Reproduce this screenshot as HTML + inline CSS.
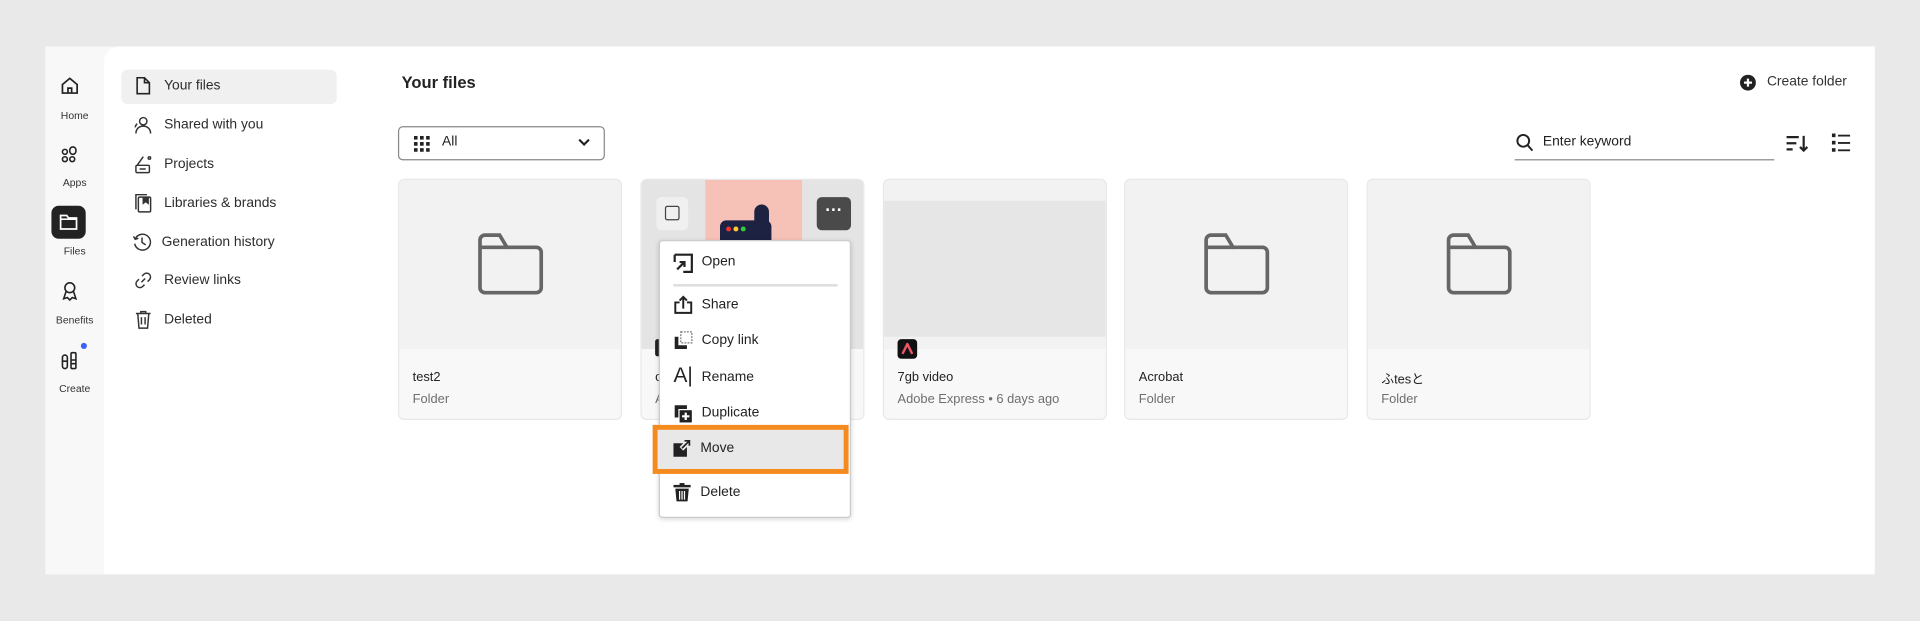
<!DOCTYPE html>
<html><head><meta charset="utf-8">
<style>
*{margin:0;padding:0;box-sizing:border-box}
html,body{width:1920px;height:621px;overflow:hidden;background:#e9e9e9;font-family:"Liberation Sans","Noto Sans CJK JP",sans-serif;color:#222}
#s{position:absolute;left:0;top:0;width:1568px;height:507px;transform:scale(1.22449);transform-origin:0 0}
.a{position:absolute}
.panel{left:37px;top:38px;width:1494px;height:431px;background:#f8f8f8}
.main{left:85px;top:38px;width:1446px;height:431px;background:#fff;border-top-left-radius:12px}
.rl{position:absolute;width:48px;left:37px;text-align:center;font-size:8.5px;color:#333}
.nav{position:absolute;left:134px;font-size:11.3px;color:#2c2c2c}
.ni{position:absolute;left:109px}
.card{position:absolute;top:146px;width:183px;height:197px;border:1px solid #e8e8e8;border-radius:5px;background:#f8f8f8;overflow:hidden}
.card .img{position:absolute;left:0;top:0;right:0;height:138px;background:#f2f2f2}
.card .t{position:absolute;left:11px;top:155px;font-size:10.5px;color:#222}
.card .st{position:absolute;left:11px;top:173px;font-size:10.5px;color:#6e6e6e}
.fold{position:absolute;left:63px;top:43px}
.menu{left:538px;top:196px;width:157px;height:227px;background:#fff;border:1px solid #ccc;border-radius:3px;box-shadow:0 1px 4px rgba(0,0,0,.15)}
.mi{position:absolute;left:34px;font-size:11.3px;color:#222}
.mic{position:absolute;left:11px}
</style></head><body>
<div id="s">
<div class="a panel"></div>
<div class="a main"></div>

<svg class="a" style="left:49px;top:62px" width="16" height="16" viewBox="0 0 16 16" fill="none" stroke="#222" stroke-width="1.4"><path d="M2 7L8 2l6 5v7H2z"/><path d="M6.5 14v-4h3v4"/></svg>
<div class="rl" style="top:89px">Home</div>
<svg class="a" style="left:49px;top:118px" width="16" height="16" viewBox="0 0 16 16" fill="none" stroke="#222" stroke-width="1.3"><circle cx="4" cy="6" r="2"/><circle cx="4" cy="12" r="2"/><circle cx="10" cy="12" r="2"/><rect x="8" y="2" width="5" height="6" rx="2.5"/></svg>
<div class="rl" style="top:144px">Apps</div>
<div class="a" style="left:42px;top:168px;width:28px;height:27px;background:#222;border-radius:6px"></div>
<svg class="a" style="left:48px;top:174px" width="16" height="15" viewBox="0 0 16 15" fill="none" stroke="#fff" stroke-width="1.4"><path d="M1.5 2h5l1.5 2h6.5v9h-13z"/><path d="M1.5 5h13"/></svg>
<div class="rl" style="top:200px">Files</div>
<svg class="a" style="left:49px;top:229px" width="16" height="17" viewBox="0 0 16 17" fill="none" stroke="#222" stroke-width="1.3"><circle cx="8" cy="6" r="4"/><path d="M5 9l-2 6 3-1 2 2 2-2 3 1-2-6"/></svg>
<div class="rl" style="top:256px">Benefits</div>
<svg class="a" style="left:49px;top:286px" width="16" height="17" viewBox="0 0 16 17" fill="none" stroke="#222" stroke-width="1.3"><rect x="2" y="4" width="4" height="11" rx="2"/><rect x="9" y="2" width="4" height="13" rx="1"/><path d="M2 9h4M9 8h4M9 11h4"/></svg>
<div class="a" style="left:66px;top:280px;width:5px;height:5px;border-radius:50%;background:#3b63fb"></div>
<div class="rl" style="top:312px">Create</div>

<div class="a" style="left:99px;top:57px;width:176px;height:28px;background:#f0f0f0;border-radius:5px"></div>
<svg class="ni" style="top:62px" width="16" height="16" viewBox="0 0 16 16" fill="none" stroke="#222" stroke-width="1.3"><path d="M3 1.5h6l4 4v9H3z"/><path d="M9 1.5v4h4"/></svg>
<div class="nav" style="top:64px">Your files</div>
<svg class="ni" style="top:94px" width="16" height="16" viewBox="0 0 16 16" fill="none" stroke="#333" stroke-width="1.2"><circle cx="8" cy="5" r="3"/><path d="M2 15c0-4 3-6 6-6s6 2 6 6"/><path d="M3 7c-1 1-1.5 2-1.5 3"/></svg>
<div class="nav" style="top:96px">Shared with you</div>
<svg class="ni" style="top:126px" width="16" height="16" viewBox="0 0 16 16" fill="none" stroke="#333" stroke-width="1.2"><rect x="2" y="9" width="11" height="6" rx="1"/><path d="M3 9l5-7M5 12h5"/><circle cx="13" cy="3" r="1"/></svg>
<div class="nav" style="top:128px">Projects</div>
<svg class="ni" style="top:158px" width="16" height="16" viewBox="0 0 16 16" fill="none" stroke="#333" stroke-width="1.2"><rect x="4" y="3" width="10" height="12" rx="1"/><path d="M2 13V1h9"/><path d="M8 3v5l2-1.5 2 1.5V3" fill="#333"/></svg>
<div class="nav" style="top:160px">Libraries &amp; brands</div>
<svg class="ni" style="top:190px;left:108px" width="16" height="16" viewBox="0 0 16 16" fill="none" stroke="#333" stroke-width="1.2"><path d="M2.5 5A6.5 6.5 0 1 1 2 9"/><path d="M1 3l1.5 2.5L5 4.5"/><path d="M8 4v4l3 2"/></svg>
<div class="nav" style="top:192px;left:132px">Generation history</div>
<svg class="ni" style="top:221px" width="16" height="16" viewBox="0 0 16 16" fill="none" stroke="#333" stroke-width="1.2"><path d="M6.5 9.5l3-3"/><path d="M7 4.5l1.5-1.5a3 3 0 0 1 4.5 4.5L11.5 9"/><path d="M9 11.5L7.5 13A3 3 0 0 1 3 8.5L4.5 7"/></svg>
<div class="nav" style="top:223px">Review links</div>
<svg class="ni" style="top:253px" width="16" height="16" viewBox="0 0 16 16" fill="none" stroke="#333" stroke-width="1.2"><path d="M2 3h12M6 3V1.5h4V3M3.5 3l1 12h7l1-12"/><path d="M6.5 6v6M9.5 6v6"/></svg>
<div class="nav" style="top:255px">Deleted</div>

<div class="a" style="left:328px;top:60px;font-size:13.5px;font-weight:bold;color:#222">Your files</div>
<svg class="a" style="left:1421px;top:61px" width="13" height="13" viewBox="0 0 14 14"><circle cx="7" cy="7" r="7" fill="#222"/><path d="M7 3.5v7M3.5 7h7" stroke="#fff" stroke-width="2"/></svg>
<div class="a" style="left:1443px;top:61px;font-size:11.3px;color:#333">Create folder</div>

<div class="a" style="left:325px;top:103px;width:169px;height:28px;border:1px solid #888;border-radius:4px;background:#fff"></div>
<svg class="a" style="left:338px;top:111px" width="13" height="13" viewBox="0 0 13 13" fill="#222"><rect x="0" y="0" width="3" height="3"/><rect x="5" y="0" width="3" height="3"/><rect x="10" y="0" width="3" height="3"/><rect x="0" y="5" width="3" height="3"/><rect x="5" y="5" width="3" height="3"/><rect x="10" y="5" width="3" height="3"/><rect x="0" y="10" width="3" height="3"/><rect x="5" y="10" width="3" height="3"/><rect x="10" y="10" width="3" height="3"/></svg>
<div class="a" style="left:361px;top:110px;font-size:11.3px;color:#222">All</div>
<svg class="a" style="left:472px;top:113px" width="10" height="7" viewBox="0 0 10 7" fill="none" stroke="#222" stroke-width="1.8"><path d="M1 1l4 4 4-4"/></svg>

<svg class="a" style="left:1238px;top:109px" width="14" height="15" viewBox="0 0 14 15" fill="none" stroke="#222" stroke-width="1.6"><circle cx="6" cy="6" r="4.8"/><path d="M9.5 9.5l4 4.5"/></svg>
<div class="a" style="left:1260px;top:110px;font-size:11.3px;color:#222">Enter keyword</div>
<div class="a" style="left:1237px;top:130px;width:212px;height:1px;background:#888"></div>
<svg class="a" style="left:1459px;top:110px" width="18" height="15" viewBox="0 0 18 15" fill="none" stroke="#222" stroke-width="2"><path d="M0 2h10M0 7h8M0 12h5M14 1v12M11 10l3 3 3-3" stroke-width="1.8"/></svg>
<svg class="a" style="left:1496px;top:109px" width="15" height="15" viewBox="0 0 15 15" fill="#222"><rect x="0" y="0" width="3" height="3"/><rect x="0" y="6" width="3" height="3"/><rect x="0" y="12" width="3" height="3"/><rect x="5" y="1" width="10" height="1.5"/><rect x="5" y="7" width="10" height="1.5"/><rect x="5" y="13" width="10" height="1.5"/></svg>

<div class="card" style="left:325px"><div class="img"></div>
<svg class="fold" width="56" height="52" viewBox="0 0 56 52" fill="none" stroke="#666" stroke-width="3"><path d="M3 14V6a4 4 0 0 1 4-4h12l6 10h24a4 4 0 0 1 4 4v29a4 4 0 0 1-4 4H7a4 4 0 0 1-4-4z"/><path d="M3 12h22"/></svg>
<div class="t">test2</div><div class="st">Folder</div></div>

<div class="card" style="left:523px"><div class="img" style="background:#e4e4e4"></div>
<div class="a" style="left:52px;top:0;width:79px;height:138px;background:#f6c1b6"></div>
<div class="a" style="left:64px;top:33px;width:42px;height:30px;background:#1d2142;border-radius:5px"></div>
<div class="a" style="left:92px;top:20px;width:12px;height:40px;background:#1d2142;border-radius:6px 6px 0 0"></div>
<div class="a" style="left:69px;top:38px;width:4px;height:4px;border-radius:50%;background:#e33"></div>
<div class="a" style="left:75px;top:38px;width:4px;height:4px;border-radius:50%;background:#fc3"></div>
<div class="a" style="left:81px;top:38px;width:4px;height:4px;border-radius:50%;background:#3c3"></div>
<div class="a" style="left:12px;top:14px;width:26px;height:27px;background:#f0f0f0;border-radius:4px"></div>
<div class="a" style="left:19px;top:21px;width:12px;height:12px;border:1.5px solid #444;border-radius:2px"></div>
<div class="a" style="left:143px;top:14px;width:28px;height:27px;background:#4a4a4a;border-radius:4px;color:#fff;font-size:14px;text-align:center;line-height:20px;font-weight:bold">···</div>
<div class="a" style="left:11px;top:130px;width:8px;height:14px;background:#222;border-radius:2px"></div>
<div class="t">c</div><div class="st">A</div></div>

<div class="card" style="left:721px"><div class="img" style="background:#f2f2f2"></div>
<div class="a" style="left:0;top:17px;right:0;height:111px;background:#e6e6e6"></div>
<div class="a" style="left:11px;top:130px;width:16px;height:16px;background:#111;border-radius:3px"></div>
<svg class="a" style="left:14px;top:133px" width="10" height="10" viewBox="0 0 10 10"><path d="M1 9L5 1l4 8" fill="none" stroke="#e56" stroke-width="2"/></svg>
<div class="t">7gb video</div><div class="st">Adobe Express • 6 days ago</div></div>

<div class="card" style="left:918px"><div class="img"></div>
<svg class="fold" width="56" height="52" viewBox="0 0 56 52" fill="none" stroke="#666" stroke-width="3"><path d="M3 14V6a4 4 0 0 1 4-4h12l6 10h24a4 4 0 0 1 4 4v29a4 4 0 0 1-4 4H7a4 4 0 0 1-4-4z"/><path d="M3 12h22"/></svg>
<div class="t">Acrobat</div><div class="st">Folder</div></div>

<div class="card" style="left:1116px"><div class="img"></div>
<svg class="fold" width="56" height="52" viewBox="0 0 56 52" fill="none" stroke="#666" stroke-width="3"><path d="M3 14V6a4 4 0 0 1 4-4h12l6 10h24a4 4 0 0 1 4 4v29a4 4 0 0 1-4 4H7a4 4 0 0 1-4-4z"/><path d="M3 12h22"/></svg>
<div class="t">ふtesと</div><div class="st">Folder</div></div>

<div class="a menu">
<svg class="mic" style="top:10px" width="16" height="16" viewBox="0 0 16 16" fill="none" stroke="#222" stroke-width="1.8"><path d="M1 1h14v14H8"/><path d="M1 1v6M3 13l6-6M5 7h4v4"/></svg>
<div class="mi" style="top:11px">Open</div>
<div class="a" style="left:11px;top:35px;width:134px;height:2px;background:#ddd"></div>
<svg class="mic" style="top:44px" width="16" height="16" viewBox="0 0 16 16" fill="none" stroke="#222" stroke-width="1.6"><path d="M5 6H1.5v8.5h13V6H11"/><path d="M8 11V1.5M5 4.5l3-3 3 3"/></svg>
<div class="mi" style="top:46px">Share</div>
<svg class="mic" style="top:73px" width="16" height="16" viewBox="0 0 16 16"><path d="M1 5v10h10v-3H4V5z" fill="#222"/><rect x="6" y="1" width="9" height="9" fill="none" stroke="#777" stroke-dasharray="1.5 1"/></svg>
<div class="mi" style="top:75px">Copy link</div>
<div class="mic" style="top:100px;font-size:17px;color:#222">A|</div>
<div class="mi" style="top:105px">Rename</div>
<svg class="mic" style="top:133px" width="16" height="16" viewBox="0 0 16 16"><path d="M1 1h10v3H4v7H1z" fill="#222"/><rect x="5" y="5" width="10" height="10" fill="#222"/><path d="M10 7v6M7 10h6" stroke="#fff" stroke-width="1.8"/></svg>
<div class="mi" style="top:134px">Duplicate</div>
</div>
<div class="a" style="left:533px;top:347px;width:160px;height:40px;border:4px solid #f58a1f;background:#e8e8e8"></div>
<svg class="a" style="left:549px;top:358px" width="16" height="16" viewBox="0 0 16 16"><path d="M1 4h8v0L6 7l3 3 3-3v8H1z" fill="#222"/><path d="M8 8l6-6M10 2h4v4" stroke="#222" stroke-width="1.4" fill="none"/></svg>
<div class="a" style="left:572px;top:360px;font-size:11.3px;color:#222">Move</div>
<svg class="a" style="left:549px;top:394px" width="16" height="16" viewBox="0 0 16 16" fill="#222"><rect x="1" y="2" width="14" height="2"/><rect x="6" y="0.5" width="4" height="2"/><path d="M2.5 5h11l-1 10.5h-9z"/><path d="M6 7v7M10 7v7M8 7v7" stroke="#fff" stroke-width="1"/></svg>
<div class="a" style="left:572px;top:396px;font-size:11.3px;color:#222">Delete</div>
</div>
</body></html>
